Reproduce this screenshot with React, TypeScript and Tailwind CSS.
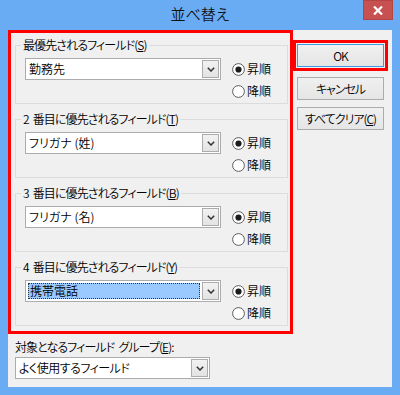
const font = "font-['Noto_Sans_CJK_JP','Noto_Sans',sans-serif] [font-feature-settings:'palt'] font-[350]";

function Chevron() {
  return (
    <svg width="8" height="5" viewBox="0 0 8 5">
      <polyline points="0.8,0.8 4,4 7.2,0.8" fill="none" stroke="#333" strokeWidth="1.5" />
    </svg>
  );
}

function Combo({ value, selected, width }: { value: string; selected?: boolean; width: string }) {
  return (
    <div className={`flex h-[22px] border border-[#acacac] bg-white ${width}`}>
      <div className="flex flex-1 p-[2px]">
        {selected ? (
          <div className="flex flex-1 items-center border border-dotted border-[#333] bg-[#99c9ff] pl-[1px] text-black">
            {value}
          </div>
        ) : (
          <div className="flex flex-1 items-center pl-[1px]">{value}</div>
        )}
      </div>
      <div className="my-[1px] mr-[1px] flex w-[17px] items-center justify-center border border-[#acacac] bg-gradient-to-b from-[#f2f2f2] to-[#e3e3e3]">
        <Chevron />
      </div>
    </div>
  );
}

function Radio({ checked, label }: { checked?: boolean; label: string }) {
  return (
    <div className="flex h-[22px] items-center gap-[2px]">
      <svg width="13" height="13" viewBox="0 0 13 13">
        <circle cx="6.5" cy="6.5" r="5.9" fill="#fff" stroke="#5c5c5c" strokeWidth="1" />
        {checked && <circle cx="6.5" cy="6.5" r="3.1" fill="#1c1c1c" />}
      </svg>
      <span>{label}</span>
    </div>
  );
}

function SortGroup({ num, title, mn, value, selected }: { num?: string; title: string; mn: string; value: string; selected?: boolean }) {
  return (
    <fieldset className="border border-[#dcdcdc] pl-[9px] pr-[6px] pt-[5px] pb-[1px]">
      <legend className="ml-[-4px] px-[2px] leading-[16px] tracking-[-0.9px]">
        {num && <span className="mr-[4px]">{num}</span>}
        {title}(<u>{mn}</u>)
      </legend>
      <div className="flex items-start gap-[11px]">
        <Combo value={value} selected={selected} width="w-[196px]" />
        <div className="flex flex-col">
          <Radio checked label="昇順" />
          <Radio label="降順" />
        </div>
      </div>
    </fieldset>
  );
}

function Btn({ children, primary }: { children: React.ReactNode; primary?: boolean }) {
  return (
    <div
      className={`flex h-[23px] w-[87px] items-center justify-center border bg-gradient-to-b from-[#f0f0f0] to-[#e5e5e5] tracking-[-1px] ${
        primary ? "border-[#3c9be8]" : "border-[#acacac]"
      }`}
    >
      {children}
    </div>
  );
}

export default function App() {
  return (
    <div className={`h-[395px] w-[400px] bg-[#6aacf4] text-[12px] text-black ${font}`}>
      <div className="grid h-[30px] grid-cols-[1fr_auto_1fr]">
        <div />
        <div className="pt-[5px] text-[15px] leading-[18px] text-[#111]">並べ替え</div>
        <div className="flex justify-end pr-[7px]">
          <div className="flex h-[20px] w-[30px] items-center justify-center border border-[#b54444] bg-[#c75050]">
            <svg width="10" height="9" viewBox="0 0 10 9">
              <path d="M1 0.5 L9 8.5 M9 0.5 L1 8.5" stroke="#fff" strokeWidth="2.2" />
            </svg>
          </div>
        </div>
      </div>

      <div className="ml-[8px] flex h-[357px] w-[384px] bg-[#f0f0f0]">
        <div className="flex w-[285px] flex-col">
          <div className="flex flex-col gap-[7px] border-[3px] border-[#ff0000] pb-[5px] pl-[4px] pr-[2px] pt-[4px]">
            <SortGroup title="最優先されるフィールド" mn="S" value="勤務先" />
            <SortGroup num="2" title="番目に優先されるフィールド" mn="T" value="フリガナ (姓)" />
            <SortGroup num="3" title="番目に優先されるフィールド" mn="B" value="フリガナ (名)" />
            <SortGroup num="4" title="番目に優先されるフィールド" mn="Y" value="携帯電話" selected />
          </div>
          <div className="mt-[5px] pl-[7px] leading-[16px] tracking-[-0.9px]">
            対象となるフィールド<span className="ml-[4px]">グループ</span>(<u>E</u>):
          </div>
          <div className="mt-[2px] pl-[7px] tracking-[-0.5px]">
            <Combo value="よく使用するフィールド" width="w-[195px]" />
          </div>
        </div>

        <div className="flex flex-col pt-[10px]">
          <div className="border-[3px] border-[#ff0000] p-[1px]">
            <Btn primary>OK</Btn>
          </div>
          <div className="ml-[4px] mt-[6px]">
            <Btn>キャンセル</Btn>
          </div>
          <div className="ml-[4px] mt-[7px]">
            <Btn>
              すべてクリア(<u>C</u>)
            </Btn>
          </div>
        </div>
      </div>
    </div>
  );
}
